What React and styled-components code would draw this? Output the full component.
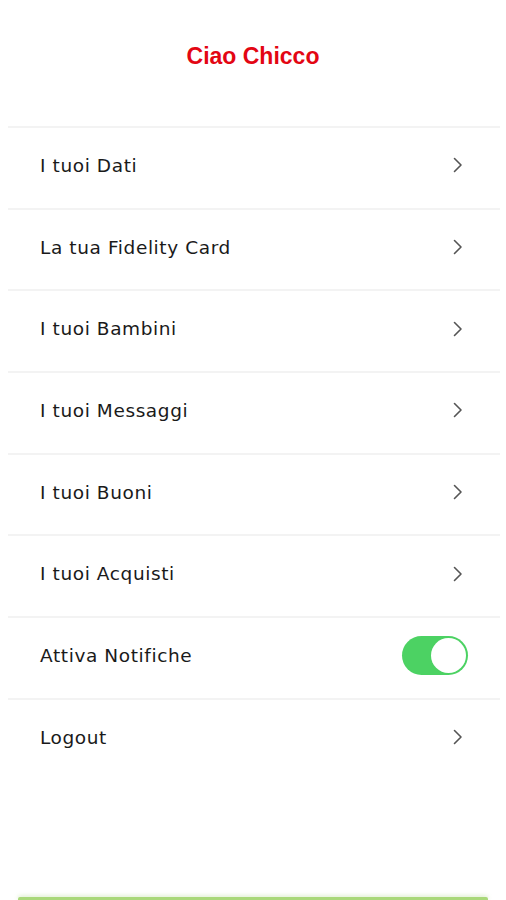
import React, { useState } from 'react'
import styled, { createGlobalStyle } from 'styled-components'

const GlobalStyle = createGlobalStyle`
  html, body {
    margin: 0;
    padding: 0;
    background: #ffffff;
  }
  body {
    font-family: "DejaVu Sans", "Noto Sans", sans-serif;
    color: #1e1e1e;
  }
`

const items = [
  { label: 'I tuoi Dati' },
  { label: 'La tua Fidelity Card' },
  { label: 'I tuoi Bambini' },
  { label: 'I tuoi Messaggi' },
  { label: 'I tuoi Buoni' },
  { label: 'I tuoi Acquisti' },
  { label: 'Attiva Notifiche', toggle: true },
  { label: 'Logout' },
]

const Chevron = () => (
  <svg width="12" height="16" viewBox="0 0 12 16" fill="none">
    <path d="M2.5 1.5 L9 8 L2.5 14.5" stroke="#555" strokeWidth="1.6" strokeLinecap="round" strokeLinejoin="round" />
  </svg>
)

export default function App() {
  const [notify, setNotify] = useState(true)

  return <Page>
    <GlobalStyle />
    <Header>
      <Title>Ciao Chicco</Title>
    </Header>
    <List>
      {items.map(item => (
        <Row key={item.label}>
          <Label>{item.label}</Label>
          {item.toggle
            ? <Switch on={notify} onClick={() => setNotify(!notify)}><Knob on={notify} /></Switch>
            : <Arrow><Chevron /></Arrow>}
        </Row>
      ))}
    </List>
    <Spacer />
    <BottomBar />
  </Page>
}

const Page = styled.div`
  height: 900px;
  display: flex;
  flex-direction: column;
  overflow: hidden;
`

const Header = styled.header`
  height: 126px;
  display: flex;
  justify-content: center;
  padding-top: 42px;
  box-sizing: border-box;
`

const Title = styled.h1`
  margin: 0;
  font-family: "Liberation Sans", Arial, sans-serif;
  font-weight: 700;
  font-size: 23px;
  line-height: 28px;
  color: #e30613;
`

const List = styled.ul`
  list-style: none;
  margin: 0 6px 0 8px;
  padding: 0;
`

const Row = styled.li`
  height: 81.7px;
  box-sizing: border-box;
  border-top: 2px solid #f3f3f3;
  display: flex;
  align-items: center;
  justify-content: space-between;
  padding: 0 32px 5px 32px;
`

const Label = styled.span`
  font-size: 18.5px;
  letter-spacing: 0.6px;
  color: #1a1a1a;
`

const Arrow = styled.span`
  display: flex;
  align-items: center;
  margin-right: 4px;
`

const Switch = styled.button`
  width: 66px;
  height: 39px;
  border-radius: 20px;
  border: none;
  padding: 0;
  margin-right: 0;
  background: ${({ on }) => on ? '#4cd263' : '#e5e5e5'};
  display: flex;
  align-items: center;
  justify-content: ${({ on }) => on ? 'flex-end' : 'flex-start'};
  cursor: pointer;
`

const Knob = styled.span`
  width: 35px;
  height: 35px;
  margin: 0 2px;
  border-radius: 50%;
  background: #fff;
  box-shadow: 0 0 0 1px ${({ on }) => on ? '#4cd263' : '#ddd'};
`

const Spacer = styled.div`
  flex: 1;
`

const BottomBar = styled.div`
  height: 3px;
  margin: 0 18px;
  border-radius: 2px 2px 0 0;
  background: #a9d87a;
  box-shadow: 0 -1px 4px rgba(150, 200, 100, 0.4);
`
